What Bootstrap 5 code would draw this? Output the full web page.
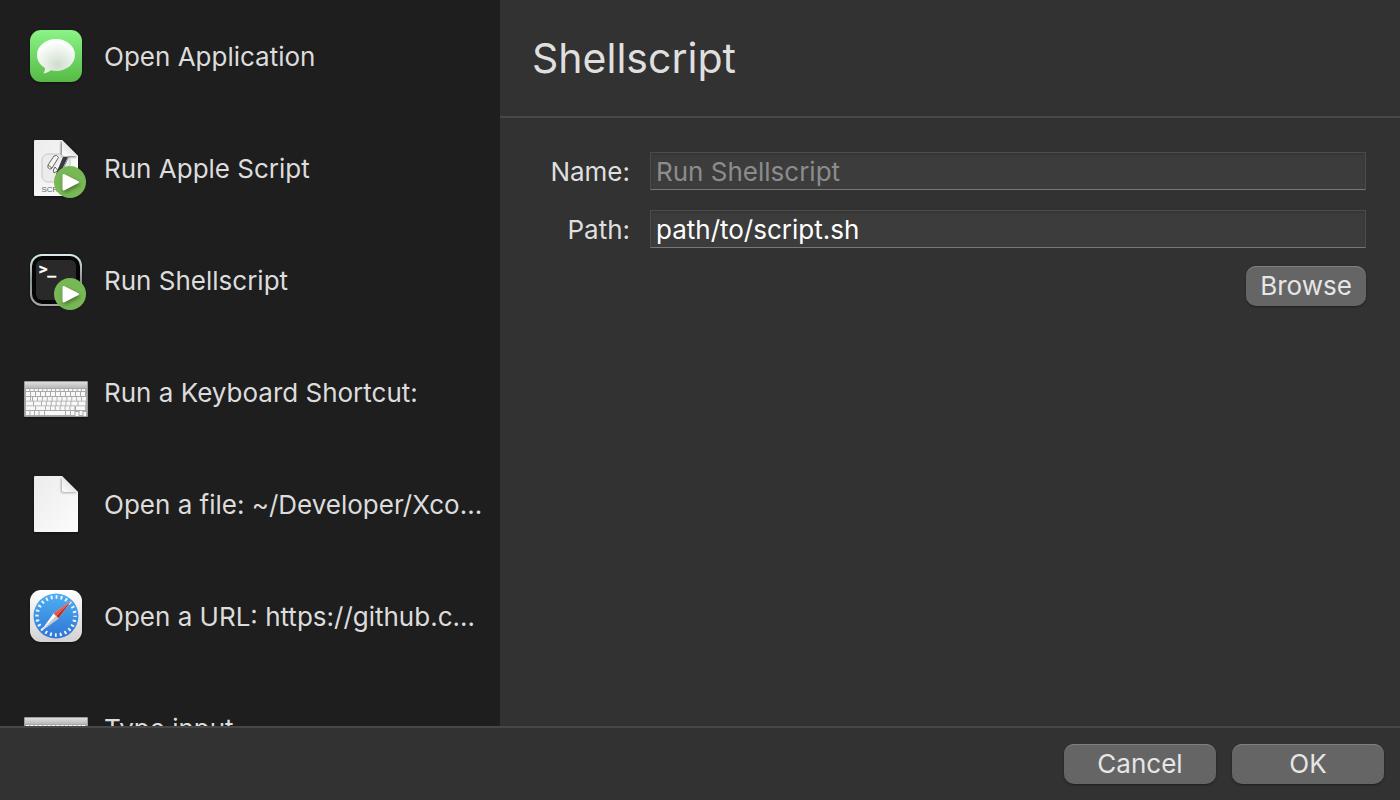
<!DOCTYPE html>
<html lang="en">
<head>
<meta charset="utf-8">
<meta name="viewport" content="width=device-width, initial-scale=1">
<title>Shellscript</title>
<link href="https://cdn.jsdelivr.net/npm/bootstrap@5.3.0/dist/css/bootstrap.min.css" rel="stylesheet">
<style>
body{background:#323232;color:#dfdfdf;font-family:Inter,"Liberation Sans",sans-serif;font-size:26px;line-height:32px}
.sidebar{flex:0 0 500px;background:#1e1e1e}
.action{height:112px;padding:0 16px 0 24px;color:#dcdcdc}
.action:hover{color:#dcdcdc}
.action svg{width:64px;height:64px}
.action span{padding-top:2px}
.rule-b{border-bottom:2px solid #474747}
.rule-t{border-top:2px solid #474747}
.title-bar{height:118px;padding:0 32px}
.title-bar h1{font-size:41px;line-height:52px;font-weight:400}
.fields{padding:34px 34px 0 0}
.field-row{gap:20px;margin-bottom:20px}
.field-row + .field-row{margin-bottom:18px}
.field-label{width:130px;height:38px;line-height:40px}
.field{height:38px;padding:0 5px;border:1px solid #4b4b4b;border-bottom-color:#777;border-radius:0;background:#3c3c3c;color:#fff;font-size:26px;line-height:36px;box-shadow:inset 0 2px 2px #363636}
.field:focus{background:#3c3c3c;color:#fff}
.field::placeholder{color:#8c8c8c;opacity:1}
.push,.push:hover{height:40px;padding:0;border:0;border-radius:10px;background:#656565;color:#e6e6e6;font-size:26px;line-height:38px;box-shadow:inset 0 1px 0 #7f7f7f,0 1px 2px #1f1f1f}
.push-sm{width:120px}
.push-lg{width:152px}
.bottom-bar{height:74px;padding:0 16px}
</style>
</head>
<body>
<svg width="0" height="0" class="position-absolute" aria-hidden="true">
<defs>
<linearGradient id="green" x2="0" y2="1"><stop stop-color="#8bf486"/><stop offset="1" stop-color="#55bb45"/></linearGradient>
<radialGradient id="bubble" cx=".55" cy=".75" r=".65"><stop stop-color="#d0dccf"/><stop offset="1" stop-color="#fcfffc"/></radialGradient>
<linearGradient id="paper" x2="1" y2="1"><stop stop-color="#ececec"/><stop offset="1" stop-color="#fcfcfc"/></linearGradient>
<linearGradient id="fold" x1="0" y1="1" x2=".6" y2=".4"><stop stop-color="#fff"/><stop offset="1" stop-color="#e2e2e2"/></linearGradient>
<linearGradient id="tile" x2="0" y2="1"><stop stop-color="#fff"/><stop offset="1" stop-color="#d2d2d2"/></linearGradient>
<linearGradient id="rim" x2="0" y2="1"><stop stop-color="#dcecef"/><stop offset=".5" stop-color="#8b9496"/><stop offset="1" stop-color="#a8a8a8"/></linearGradient>
<linearGradient id="sky" x2="0" y2="1"><stop stop-color="#4fb0f0"/><stop offset="1" stop-color="#2f74d8"/></linearGradient>
<linearGradient id="metal" x2="0" y2="1"><stop stop-color="#dedede"/><stop offset="1" stop-color="#b8b8b8"/></linearGradient>
<filter id="shade" x="-20%" y="-20%" width="140%" height="150%" color-interpolation-filters="sRGB"><feDropShadow dx="0" dy="1" stdDeviation="1" flood-opacity=".45"/></filter>
<filter id="shade-fold" x="-30%" y="-30%" width="160%" height="160%" color-interpolation-filters="sRGB"><feDropShadow dx="-1" dy="1" stdDeviation="1.200" flood-opacity=".3"/></filter>
<filter id="shade-play" x="-50%" y="-50%" width="200%" height="200%" color-interpolation-filters="sRGB"><feDropShadow dx="1" dy="2" stdDeviation="2" flood-opacity=".4"/></filter>
<clipPath id="sheet-shape"><path d="M11 4H38L54 20V59Q54 60 53 60H11Q10 60 10 59V5Q10 4 11 4Z"/></clipPath>
<symbol id="sheet" viewBox="0 0 64 64">
<path d="M11 4H38L54 20V59Q54 60 53 60H11Q10 60 10 59V5Q10 4 11 4Z" fill="url(#paper)" filter="url(#shade)"/>
<g clip-path="url(#sheet-shape)"><path d="M38 4V18Q38 20 40 20H54Z" fill="url(#fold)" filter="url(#shade-fold)"/></g>
</symbol>
<symbol id="play" viewBox="0 0 64 64">
<circle cx="46" cy="46" r="16" fill="#78b856"/>
<path d="M38.500 39.500Q38.500 37.500 40.500 38.200L54.500 45.300Q56 46.200 54.500 47.100L40.500 54.300Q38.500 55 38.500 53Z" fill="#fff" filter="url(#shade-play)"/>
</symbol>
<symbol id="keyboard" viewBox="0 0 64 64">
<rect y="21" width="64" height="36" rx="1" fill="#9c9c9c" filter="url(#shade)"/>
<rect x="1" y="22" width="62" height="6" fill="url(#metal)"/>
<rect x="1" y="28" width="62" height="28" fill="#a9a9a9"/>
<g stroke="#f8f8f8" fill="none">
<path d="M2 30H62" stroke-width="2" stroke-dasharray="3.300 1"/>
<path d="M2 34H62" stroke-width="3.800" stroke-dasharray="4 1"/>
<path d="M2 38.800H8M9 38.800H62" stroke-width="3.800" stroke-dasharray="4 .9"/>
<path d="M2 43.500H9M10 43.500H53.500M54.500 43.500H62" stroke-width="3.800" stroke-dasharray="7 .9 4 .9 4 .9 4 .9 4 .9 4 .9 4 .9"/>
<path d="M2 48.200H11M12 48.200H51M52 48.200H62" stroke-width="3.800" stroke-dasharray="9 .9 4 .9 4 .9 4 .9 4 .9 4 .9 4 .9"/>
<path d="M2 53H5.500M6.500 53H10M11 53H14.500M15.500 53H20M21 53H41M42 53H46M47 53H50.500M51.500 54H54.500M55.500 53H58.500M59.500 54H62" stroke-width="3.800"/>
</g>
</symbol>
</defs>
</svg>

<div class="vh-100 d-flex flex-column overflow-hidden">
<main class="d-flex flex-fill overflow-hidden">
<nav class="sidebar overflow-hidden" aria-label="Actions">
<a href="#" class="action d-flex align-items-center gap-3 text-decoration-none">
<svg class="flex-shrink-0" viewBox="0 0 64 64" aria-hidden="true">
<rect x="6" y="6" width="52" height="52" rx="11" fill="url(#green)" filter="url(#shade)"/>
<path d="M32 15C21.500 15 13 22 13 31C13 36.500 16 41 21 44C21.200 46.500 20 48.500 19.500 49.500C22.500 49.200 25 47.600 27 46.300Q29.500 47 32 47C42.500 47 51 40 51 31S42.500 15 32 15Z" fill="url(#bubble)"/>
</svg>
<span class="text-truncate">Open Application</span>
</a>
<a href="#" class="action d-flex align-items-center gap-3 text-decoration-none">
<svg class="flex-shrink-0" viewBox="0 0 64 64" aria-hidden="true">
<use href="#sheet"/>
<g clip-path="url(#sheet-shape)">
<rect x="18" y="18" width="28" height="28" rx="6" fill="#ececec" stroke="#c6c6c6"/>
<path d="M38 4V18Q38 20 40 20H54Z" fill="url(#fold)" filter="url(#shade-fold)"/>
<path d="M24 29L30 20Q33 18 34.500 21.500L28 32ZM24 29Q23 33 27 33L28 32M31 31L34 34.500L39 23M31 31Q28 34 30 37L34 34.500" fill="#f5f5f5" stroke="#666"/>
<path d="M39 21H44L35 40L32 42V38Z" fill="#343a40"/>
<path d="M45 20L36 40" fill="none" stroke="#8d9499"/>
</g>
<text x="17.500" y="56" font-family="Liberation Sans,sans-serif" font-size="8" fill="#666">SCRIPT</text>
<use href="#play"/>
</svg>
<span class="text-truncate">Run Apple Script</span>
</a>
<a href="#" class="action d-flex align-items-center gap-3 text-decoration-none">
<svg class="flex-shrink-0" viewBox="0 0 64 64" aria-hidden="true">
<rect x="6" y="6" width="52" height="52" rx="12" fill="url(#rim)" filter="url(#shade)"/>
<rect x="8" y="8" width="48" height="48" rx="10" fill="#050505"/>
<rect x="12" y="12" width="40" height="40" rx="6" fill="#292929"/>
<text x="15" y="26" font-family="DejaVu Sans Mono,monospace" font-size="14" font-weight="700" fill="#fff" stroke="#fff" stroke-width=".5">&gt;_</text>
<use href="#play"/>
</svg>
<span class="text-truncate">Run Shellscript</span>
</a>
<a href="#" class="action d-flex align-items-center gap-3 text-decoration-none">
<svg class="flex-shrink-0" viewBox="0 0 64 64" aria-hidden="true"><use href="#keyboard"/></svg>
<span class="text-truncate">Run a Keyboard Shortcut:</span>
</a>
<a href="#" class="action d-flex align-items-center gap-3 text-decoration-none">
<svg class="flex-shrink-0" viewBox="0 0 64 64" aria-hidden="true"><use href="#sheet"/></svg>
<span class="text-truncate">Open a file: ~/Developer/Xco…</span>
</a>
<a href="#" class="action d-flex align-items-center gap-3 text-decoration-none">
<svg class="flex-shrink-0" viewBox="0 0 64 64" aria-hidden="true">
<rect x="6" y="6" width="52" height="52" rx="11" fill="url(#tile)" filter="url(#shade)"/>
<circle cx="32" cy="32" r="22.500" fill="url(#sky)"/>
<circle cx="32" cy="32" r="19" fill="none" stroke="#eef6ff" stroke-width="3.500" stroke-dasharray="1.900 3.074" stroke-dashoffset=".95"/>
<path d="M47.500 16.500L29.500 29.500L16.500 47.500L34.500 34.500Z" fill="#fff"/>
<path d="M47.500 16.500L29.500 29.500L32 32Z" fill="#f0513f"/>
<path d="M47.500 16.500L34.500 34.500L32 32Z" fill="#b5342b"/>
<path d="M32 32L34.500 34.500L16.500 47.500Z" fill="#c2c7cd"/>
</svg>
<span class="text-truncate">Open a URL: https://github.c…</span>
</a>
<a href="#" class="action d-flex align-items-center gap-3 text-decoration-none">
<svg class="flex-shrink-0" viewBox="0 0 64 64" aria-hidden="true"><use href="#keyboard"/></svg>
<span class="text-truncate">Type input</span>
</a>
</nav>
<section class="flex-fill">
<header class="title-bar rule-b d-flex align-items-center"><h1 class="m-0">Shellscript</h1></header>
<form class="fields">
<div class="d-flex field-row">
<label for="name" class="field-label text-end flex-shrink-0">Name:</label>
<input id="name" type="text" class="form-control field" placeholder="Run Shellscript">
</div>
<div class="d-flex field-row">
<label for="path" class="field-label text-end flex-shrink-0">Path:</label>
<input id="path" type="text" class="form-control field" value="path/to/script.sh">
</div>
<div class="d-flex justify-content-end"><button type="button" class="btn push push-sm">Browse</button></div>
</form>
</section>
</main>
<footer class="bottom-bar rule-t d-flex flex-shrink-0 align-items-center justify-content-end gap-3">
<button type="button" class="btn push push-lg">Cancel</button>
<button type="button" class="btn push push-lg">OK</button>
</footer>
</div>
<script src="https://cdn.jsdelivr.net/npm/bootstrap@5.3.0/dist/js/bootstrap.bundle.min.js"></script>
</body>
</html>
